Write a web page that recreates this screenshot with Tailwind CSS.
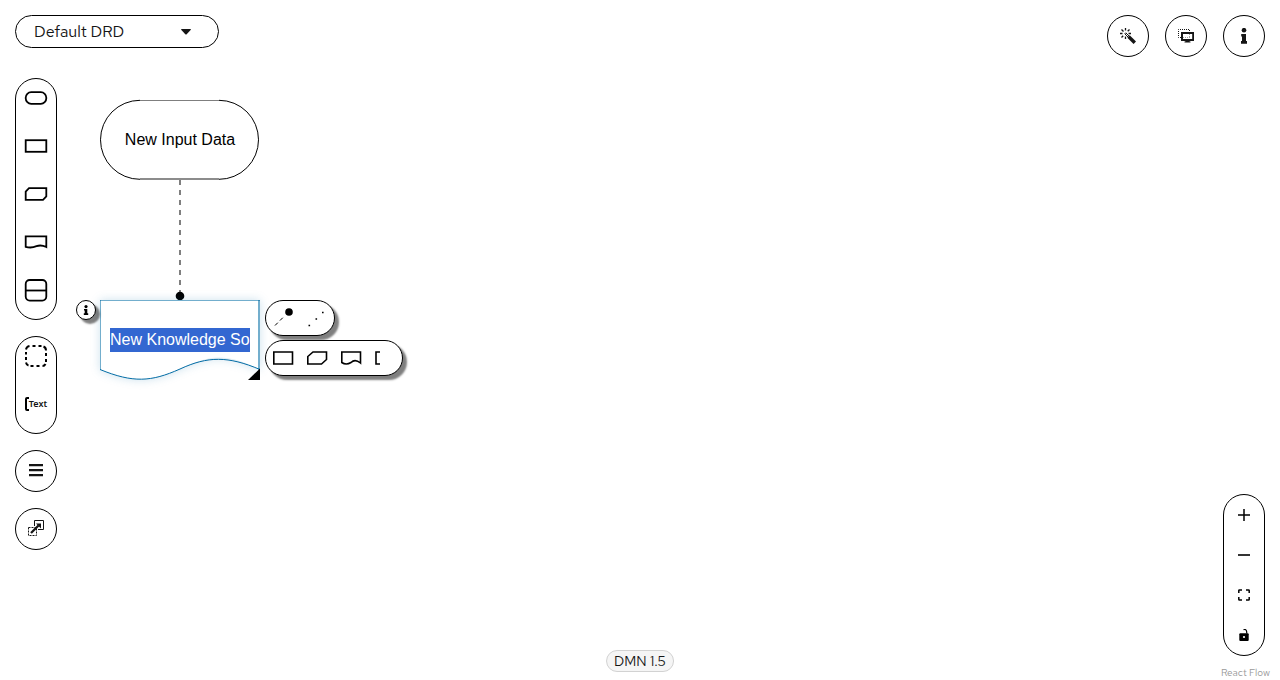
<!DOCTYPE html>
<html lang="en">
<head>
<meta charset="utf-8">
<meta name="viewport" content="width=device-width, initial-scale=1">
<title>DMN Editor</title>
<script src="https://cdn.jsdelivr.net/npm/@tailwindcss/browser@4"></script>
</head>
<body class="bg-white text-[#151515] font-['Red_Hat_Text','Noto_Sans',sans-serif]">
<div class="relative flex flex-col min-h-screen overflow-hidden">

  <!-- Diagram canvas -->
  <main class="absolute inset-0" aria-label="Diagram">
    <svg class="absolute left-0 top-0 overflow-visible" width="420" height="400" fill="none" aria-hidden="true">
      <path d="M140 100.500H219" stroke="#000" stroke-opacity=".5"/>
      <path d="M140 100.300A39.500 39.500 0 0 0 140 179.300M219 100.300A39.500 39.500 0 0 1 219 179.300" stroke="#000"/>
      <path d="M140 179H219" stroke="#000" stroke-opacity=".9"/>
      <path d="M180 180V293" stroke="#000" stroke-opacity=".5" stroke-width="2" stroke-dasharray="5 5"/>
      <circle cx="180" cy="296" r="4.300" fill="#000"/>
      <g class="drop-shadow-[0_0_5px_rgba(0,107,164,0.2)]">
        <path d="M100 300H260V370C220 348 202 360 180 369C151 382 133 383 100 370Z" fill="#fff"/>
        <path d="M100 300.500H260M100.500 300V370" stroke="#006ba4" stroke-opacity=".55"/>
        <path d="M259 300V370" stroke="#006ba4" stroke-opacity=".55" stroke-width="2"/>
        <path d="M100 369.500C133 383 151 382 180 369C208 356 228 356 260 369.500" stroke="#006ba4"/>
      </g>
      <path d="M260 368.500V380H248Z" fill="#000"/>
    </svg>
    <div class="absolute left-[100px] top-[100px] w-40 h-20 flex items-center justify-center text-black text-base font-['Liberation_Sans',sans-serif]">New Input Data</div>
    <input aria-label="Node name" value="New Knowledge Source" class="absolute left-[110px] top-[328px] w-[140px] h-6 bg-[#3367d1] text-white text-base font-['Liberation_Sans',sans-serif] outline-none">
    <button aria-label="Node information" class="absolute left-[76px] top-[300px] size-5 rounded-full border border-black bg-white shadow-[4px_4px_2px_rgba(0,0,0,0.5)] flex items-center justify-center">
      <svg width="10" height="10" viewBox="0 0 10 10" fill="#000"><circle cx="5" cy="1.600" r="1.600"/><path d="M3 4H6.300V8.200H7.200V10H2.800V8.200H3.700V5.500H3Z"/></svg>
    </button>
    <div class="absolute left-[265px] top-[300px] w-[70px] h-9 rounded-full border border-black bg-white shadow-[4px_4px_2px_rgba(0,0,0,0.5)] flex items-center gap-3 pl-[6px]">
      <button aria-label="Add authority requirement"><svg width="22" height="22" viewBox="0 0 22 22"><path d="M3 18.500L12 9.500" stroke="#000" stroke-dasharray="4 3 4"/><circle cx="17" cy="5" r="3.800" fill="#000"/></svg></button>
      <button aria-label="Add association"><svg width="22" height="22" viewBox="0 0 22 22"><path d="M2.500 18.500h1.600M9.500 12h1.600M16 5.500h1.600" stroke="#000" stroke-width="1.600"/></svg></button>
    </div>
    <div class="absolute left-[265px] top-[340px] w-[138px] h-9 rounded-full border border-black bg-white shadow-[4px_4px_2px_rgba(0,0,0,0.5)] flex items-center gap-3 pl-[6px]">
      <button aria-label="Add decision"><svg width="22" height="16" viewBox="0 0 22 16" fill="none" stroke="#000" stroke-width="1.600"><path d="M1.800 2H20.500V14H1.800Z"/></svg></button>
      <button aria-label="Add business knowledge model"><svg width="22" height="16" viewBox="0 0 22 16" fill="none" stroke="#000" stroke-width="1.600"><path d="M7 2H20.500V9.500L15.500 14H1.800V6.500Z"/></svg></button>
      <button aria-label="Add knowledge source"><svg width="22" height="16" viewBox="0 0 22 16" fill="none" stroke="#000" stroke-width="1.600"><path d="M1.800 2H20.500V13Q15 8.500 11 12.500Q6 15.500 1.800 12.500Z"/></svg></button>
      <button aria-label="Add text annotation"><svg width="22" height="16" viewBox="0 0 22 16" fill="none" stroke="#000" stroke-width="1.600"><path d="M6 2H2V14H6"/></svg></button>
    </div>
  </main>

  <!-- Top bar -->
  <header class="relative flex items-start justify-between px-[15px] pt-[15px] h-[78px]">
    <button aria-haspopup="menu" class="w-[204px] h-[33px] rounded-full border border-black bg-white flex items-center justify-between pl-[18px] pr-[27px] text-base">
      <span>Default DRD</span>
      <svg width="10" height="6" viewBox="0 0 10 6" fill="#151515"><path d="M.6 0H9.400Q10.300 .3 9.600 1.100L5.700 5.200Q5 5.900 4.300 5.200L.4 1.100Q-.3 .3 .6 0Z"/></svg>
    </button>
    <div class="flex gap-4">
      <button aria-label="Autolayout" class="size-[42px] rounded-full border border-black bg-white flex items-center justify-center">
        <svg width="16" height="16" viewBox="0 0 16 16" fill="none" stroke="#151515"><path d="M8.500 8.500L14.800 14.800" stroke-width="3.400"/><path d="M4.800 5.800L5.800 4.800L9.500 8.500L8.500 9.500Z" stroke-width="1"/><path d="M5.500 0V2.500M1.500 1.500L3.500 3.500M0 5.500H2.500M1.500 9.500L3.200 7.700M5.500 8.500V11M9.500 1.500L7.700 3.200M8.500 5.500H11" stroke-width="1.300"/></svg>
      </button>
      <button aria-label="Overlays" class="size-[42px] rounded-full border border-black bg-white flex items-center justify-center">
        <svg width="16" height="16" viewBox="0 0 16 16" fill="none" stroke="#151515"><path d="M3 9.500H.5V1.500H11.500V4" stroke-dasharray="1 1"/><rect x="4" y="5" width="11.200" height="7" stroke-width="2"/><path d="M8 12.500H11V13.500H8ZM6.500 14H12.500" stroke-width="1.200"/><path d="M5 9.500H12" stroke-dasharray="1 1" stroke-opacity=".4"/><path d="M11.500 6V10" stroke-dasharray="1 1" stroke-opacity=".4"/></svg>
      </button>
      <button aria-label="Properties" class="size-[42px] rounded-full border border-black bg-white flex items-center justify-center">
        <svg width="8" height="16" viewBox="0 0 8 16" fill="#151515"><circle cx="4" cy="2.200" r="2.300"/><path d="M1.200 6H6V13H7V15.800H1V13H2V8.500H1.200Z"/></svg>
      </button>
    </div>
  </header>

  <div class="relative flex-1 flex justify-between px-[15px] pointer-events-none">
    <!-- Node palette -->
    <aside class="flex flex-col gap-4 w-[42px] pointer-events-auto">
      <div class="rounded-full border border-black bg-white flex flex-col">
        <button aria-label="Input data" class="h-12 pb-[10px] flex items-center justify-center"><svg width="24" height="24" viewBox="0 0 24 24" fill="none" stroke="#000" stroke-width="1.800"><rect x="1.700" y="6.200" width="20.600" height="11.600" rx="5.500"/></svg></button>
        <button aria-label="Decision" class="h-12 pb-[10px] flex items-center justify-center"><svg width="24" height="24" viewBox="0 0 24 24" fill="none" stroke="#000" stroke-width="1.800"><rect x="1.700" y="6.200" width="20.600" height="11.600"/></svg></button>
        <button aria-label="Business knowledge model" class="h-12 pb-[10px] flex items-center justify-center"><svg width="24" height="24" viewBox="0 0 24 24" fill="none" stroke="#000" stroke-width="1.800"><path d="M5 6.200H22.300V14.500L19 17.800H1.700V9.500Z"/></svg></button>
        <button aria-label="Knowledge source" class="h-12 pb-[10px] flex items-center justify-center"><svg width="24" height="24" viewBox="0 0 24 24" fill="none" stroke="#000" stroke-width="1.800"><path d="M1.700 6.400H22.300V17Q17 14.500 12.500 16.200Q7 18.500 1.700 16.800Z"/></svg></button>
        <button aria-label="Decision service" class="h-12 pb-[10px] flex items-center justify-center"><svg width="24" height="24" viewBox="0 0 24 24" fill="none" stroke="#000" stroke-width="1.800"><rect x="1.700" y="2" width="20.600" height="20.600" rx="4"/><path d="M1.700 12.500H22.300"/></svg></button>
      </div>
      <div class="rounded-full border border-black bg-white flex flex-col">
        <button aria-label="Group" class="h-12 pb-[10px] flex items-center justify-center"><svg width="24" height="24" viewBox="0 0 24 24" fill="none" stroke="#000" stroke-width="2"><path d="M2 5.500Q2.500 2.500 5.500 2M8.500 2H11.500M14.500 2H17.500M19.500 2.500Q22 3.500 22 6.500M22 9V12M22 15V18M21.500 20Q20.500 22 18.500 22M15.500 22H12.500M9.500 22H6.500M4.500 21.500Q2.500 21 2 18.500M2 16V13M2 10.500V8"/></svg></button>
        <button class="h-12 pb-[10px] flex items-center justify-center text-[9px] leading-3 font-semibold font-['Noto_Sans',sans-serif]"><svg width="4" height="14" viewBox="0 0 4 14" fill="none" stroke="#000" stroke-width="2" aria-hidden="true"><path d="M4 1H2Q1 1 1 2V12Q1 13 2 13H4"/></svg>Text</button>
      </div>
      <button aria-label="DRG nodes" class="size-[42px] rounded-full border border-black bg-white flex items-center justify-center"><svg width="14" height="14" viewBox="0 0 14 14" stroke="#151515" stroke-width="2.300" stroke-linecap="butt"><path d="M0 1.200H14M0 6.200H14M0 11.200H14"/></svg></button>
      <button aria-label="External nodes" class="size-[42px] rounded-full border border-black bg-white flex items-center justify-center"><svg width="16" height="18" viewBox="0 0 16 18" fill="none" stroke="#151515"><path d="M6.500 6V.5H15.500V9.500H10"/><path d="M.5 7.500H8.500V15.500H.5Z" stroke-dasharray="2 1"/><path d="M3 13L10.500 5.500" stroke-width="2.300"/><path d="M8 3.500H13V8.500Z" fill="#151515" stroke="none"/></svg></button>
    </aside>

    <!-- Viewport controls -->
    <div class="self-end w-[42px] mb-6 rounded-full border border-black bg-white flex flex-col pointer-events-auto">
      <button aria-label="Zoom in" class="h-10 flex items-center justify-center"><svg width="12" height="12" viewBox="0 0 12 12" stroke="#000" stroke-width="1.500"><path d="M6 0V12M0 6H12"/></svg></button>
      <button aria-label="Zoom out" class="h-10 flex items-center justify-center"><svg width="12" height="12" viewBox="0 0 12 12" stroke="#000" stroke-width="1.600"><path d="M0 6H12"/></svg></button>
      <button aria-label="Fit view" class="h-10 flex items-center justify-center"><svg width="12" height="12" viewBox="0 0 12 12" fill="none" stroke="#000" stroke-width="1.500"><path d="M.8 4V1.600Q.8 1 1.400 1H4M8 1H10.600Q11.200 1 11.200 1.600V4M11.200 8V10.400Q11.200 11 10.600 11H8M4 11H1.400Q.8 11 .8 10.400V8"/></svg></button>
      <button aria-label="Toggle interactivity" class="h-10 flex items-center justify-center"><svg width="10" height="12" viewBox="0 0 10 12"><path d="M1.300 4.200H8.700Q9.700 4.200 9.700 5.200V11Q9.700 12 8.700 12H1.300Q.3 12 .3 11V5.200Q.3 4.200 1.300 4.200Z" fill="#000"/><path d="M4.500 .8Q7.300 -.3 7.700 2.800V4.500" fill="none" stroke="#000" stroke-width="1.200"/><circle cx="5" cy="8" r="1.100" fill="#fff"/></svg></button>
    </div>
  </div>

  <!-- Version and attribution -->
  <span class="absolute bottom-2 left-1/2 -translate-x-1/2 h-[22px] px-[7px] rounded-full border border-[#d2d2d2] bg-[#f5f5f5] text-sm leading-5 whitespace-nowrap">DMN 1.5</span>
  <a href="https://reactflow.dev" class="absolute bottom-0 right-[10px] text-[10px] leading-[15px] text-[#999]">React Flow</a>
</div>
</body>
</html>
